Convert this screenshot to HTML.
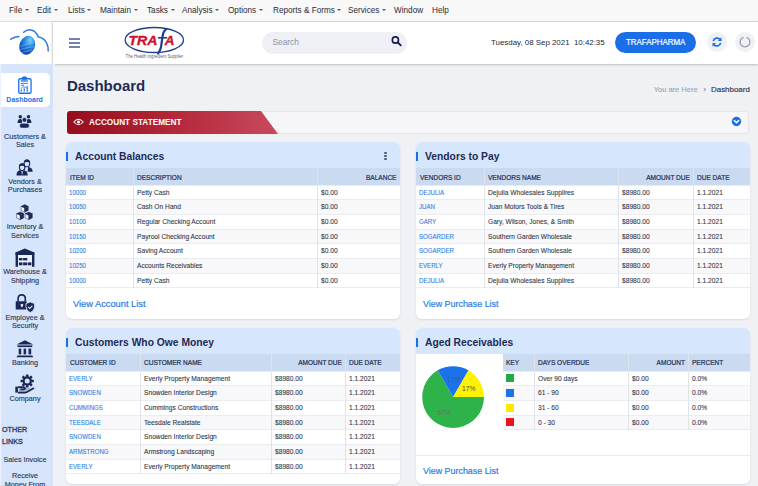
<!DOCTYPE html>
<html><head><meta charset="utf-8">
<style>
*{box-sizing:border-box;margin:0;padding:0}
html,body{width:758px;height:486px;overflow:hidden}
body{position:relative;background:#eff1f5;font-family:"Liberation Sans",sans-serif;color:#2d3345}
.abs{position:absolute}
#menubar{left:0;top:0;width:758px;height:22px;background:#f8f8f9;border-bottom:1px solid #dedfe3}
#menubar span{position:absolute;top:5.8px;font-size:8.2px;color:#2b2b33;white-space:nowrap}
#menubar i{display:inline-block;width:0;height:0;border-left:2px solid transparent;border-right:2px solid transparent;border-top:2.4px solid #55555c;margin-left:2.6px;position:relative;top:-1.8px}
#logo{left:0;top:22px;width:53px;height:42px;background:#fff}
#header{left:53px;top:22px;width:705px;height:42px;background:#fff;box-shadow:-1px 0 1.5px rgba(0,0,0,.13),0 1px 2.5px rgba(0,0,0,.18)}
#sidebar{left:0;top:64px;width:53px;height:422px;background:#d6e5fb}
#hdrshade{left:49px;top:64px;width:4px;height:422px;background:#d5e3f6}
#sbedge{left:0;top:64px;width:1px;height:422px;background:#eaf1fc}
#mainedge{left:53px;top:64px;width:2px;height:422px;background:#eef0fa}
.nav{position:absolute;left:0;width:53px;text-align:center;font-size:7.2px;line-height:8.4px;color:#2f3a58}
.nav svg{display:block;margin:0 auto}
.title{font-size:15px;font-weight:700;color:#1f2b55}
.panel{position:absolute;background:#fff;border-radius:6px;overflow:hidden;box-shadow:0 1px 2px rgba(40,60,100,.12)}
.ph{position:absolute;left:0;top:0;width:100%;background:#d6e6fd}
.ph .bar{position:absolute;left:0;width:2px;height:9px;background:#1a6fe8}
.ph .t{position:absolute;font-size:10.5px;font-weight:700;color:#1f2b55;white-space:nowrap}
table{border-collapse:collapse;table-layout:fixed;position:absolute;left:0}
th{background:#c9daf1;font-size:6.6px;font-weight:400;color:#1f2b55;text-align:left;height:17px;padding:0 3.5px;white-space:nowrap;-webkit-text-stroke:0.15px #1f2b55}
td{font-size:6.5px;height:14.7px;padding:0 3.5px;white-space:nowrap;border-top:1px solid #e4e7ed;color:#2d3345}
th+th,td+td{border-left:1px solid #dde2ea}
tr:nth-child(even) td{background:#f6f7f9}
td.l{color:#2a78e4}
.r{text-align:right}
.link{position:absolute;font-size:9.3px;color:#2f7de1;white-space:nowrap}
</style></head>
<body>
<div id="menubar" class="abs">
<span style="left:9px">File<i></i></span>
<span style="left:37px">Edit<i></i></span>
<span style="left:68px">Lists<i></i></span>
<span style="left:100px">Maintain<i></i></span>
<span style="left:147px">Tasks<i></i></span>
<span style="left:182px">Analysis<i></i></span>
<span style="left:228px">Options<i></i></span>
<span style="left:273px">Reports &amp; Forms<i></i></span>
<span style="left:348px">Services<i></i></span>
<span style="left:394px">Window</span>
<span style="left:432px">Help</span>
</div>

<div id="logo" class="abs">
<svg width="53" height="42" viewBox="0 0 53 42">
 <defs><radialGradient id="gl" cx="0.55" cy="0.2" r="0.9"><stop offset="0" stop-color="#7fd3fb"/><stop offset=".35" stop-color="#2f8fe6"/><stop offset=".8" stop-color="#1048b8"/><stop offset="1" stop-color="#0a2f90"/></radialGradient></defs>
 <path d="M10.8 17.2 Q14.5 14.6 19 14.4" stroke="#2a7ae2" stroke-width="1.5" fill="none" stroke-linecap="round"/>
 <path d="M23.7 10.3 Q27 7.3 31 7.9 Q36 8.8 38.4 15 Q43.8 15.6 46.6 21 Q48.6 25 48.2 28.9" stroke="#2a7ae2" stroke-width="1.5" fill="none" stroke-linecap="round"/>
 <ellipse cx="27.2" cy="23.3" rx="7.7" ry="9.7" transform="rotate(22 27.2 23.3)" fill="url(#gl)"/>
 <path d="M20 24.5 Q27 21.5 34.5 20.5 M20.3 27.6 Q27 25.5 34 24.5 M21.8 30.6 Q27 29 32.5 28" stroke="#8ad0fa" stroke-width=".8" fill="none" opacity=".55"/>
</svg>
</div>

<div id="header" class="abs">
 <!-- hamburger -->
 <div class="abs" style="left:16px;top:16px;width:11px;height:1.6px;background:#7083a8"></div>
 <div class="abs" style="left:16px;top:20px;width:11px;height:1.6px;background:#7083a8"></div>
 <div class="abs" style="left:16px;top:24px;width:11px;height:1.6px;background:#7083a8"></div>
 <!-- TRAFA logo -->
 <svg class="abs" style="left:70px;top:4px" width="64" height="34" viewBox="0 0 64 34">
  <ellipse cx="31.3" cy="14" rx="29.2" ry="12.5" fill="none" stroke="#1d3f8f" stroke-width="1.3"/>
  <text x="5.5" y="19.3" font-family="Liberation Sans" font-weight="700" font-style="italic" font-size="13.4" fill="#d0102a" stroke="#d0102a" stroke-width="0.35" textLength="29" lengthAdjust="spacingAndGlyphs">TRA</text>
  <text x="41.8" y="19.3" font-family="Liberation Sans" font-weight="700" font-style="italic" font-size="13.4" fill="#d0102a" stroke="#d0102a" stroke-width="0.35">A</text>
  <path d="M43.5 3 Q40.5 4.5 39.6 10 L38 21 Q37.2 25 35 27.5" stroke="#1d3f8f" stroke-width="2.2" fill="none" stroke-linecap="round"/>
  <path d="M35 11.8 L44.2 11.8" stroke="#1d3f8f" stroke-width="1.6"/>
  <text x="2.6" y="31.6" font-family="Liberation Sans" font-size="5" fill="#5d6070" textLength="57.5" lengthAdjust="spacingAndGlyphs">The Health Ingredient Supplier</text>
 </svg>
 <!-- search -->
 <div class="abs" style="left:209px;top:9.5px;width:145px;height:22.5px;border-radius:11.5px;background:#eef0f5"></div>
 <svg class="abs" style="left:337px;top:13px" width="14" height="14" viewBox="0 0 14 14">
  <circle cx="5.4" cy="5" r="3.1" fill="none" stroke="#141a4a" stroke-width="1.6"/>
  <path d="M7.8 7.5 L10.8 10.3" stroke="#141a4a" stroke-width="1.8" stroke-linecap="round"/>
 </svg>
 <div class="abs" style="left:562px;top:10.2px;width:81px;height:20.6px;border-radius:10.5px;background:#1a6fe8"></div>
 <div class="abs" style="left:654px;top:10px;width:20px;height:20px;border-radius:10px;background:#f0f1f4"></div>
 <svg class="abs" style="left:658px;top:14px" width="12" height="12" viewBox="0 0 12 12">
  <path d="M2.3 5.2 A3.9 3.9 0 0 1 9.2 3.6" stroke="#1a6fe8" stroke-width="1.7" fill="none"/>
  <path d="M10.5 1.2 L10.5 5 L6.8 5 Z" fill="#1a6fe8"/>
  <path d="M9.7 6.8 A3.9 3.9 0 0 1 2.8 8.4" stroke="#1a6fe8" stroke-width="1.7" fill="none"/>
  <path d="M1.5 10.8 L1.5 7 L5.2 7 Z" fill="#1a6fe8"/>
 </svg>
 <div class="abs" style="left:682px;top:10px;width:20px;height:20px;border-radius:10px;background:#f0f1f4"></div>
 <svg class="abs" style="left:686px;top:14px" width="12" height="12" viewBox="0 0 12 12">
  <path d="M7.5 1.3 A4.9 4.9 0 1 1 4.5 1.3" stroke="#9aa0b8" stroke-width="1.3" fill="none"/>
 </svg>
</div>

<div id="sidebar" class="abs">
</div>
<div id="hdrshade" class="abs"></div><div id="sbedge" class="abs"></div><div id="mainedge" class="abs"></div>


<!-- account statement -->
<div class="abs" style="left:67px;top:111px;width:682px;height:23px;background:#f6f6f8;border:1px solid #e4e6ec;border-radius:3px"></div>
<svg class="abs" style="left:67px;top:111px" width="212" height="23" viewBox="0 0 212 23">
 <defs><linearGradient id="rg" x1="0" y1="0" x2="1" y2="0"><stop offset="0" stop-color="#950d1c"/><stop offset=".5" stop-color="#b42739"/><stop offset="1" stop-color="#c84a5e"/></linearGradient></defs>
 <path d="M3 0 L194 0 L211 23 L3 23 Q0 23 0 20 L0 3 Q0 0 3 0 Z" fill="url(#rg)"/>
</svg>
<svg class="abs" style="left:73px;top:118px" width="11" height="8" viewBox="0 0 11 8">
 <path d="M0.8 4 Q5.5 -1.5 10.2 4 Q5.5 9.5 0.8 4 Z" fill="none" stroke="#fff" stroke-width="1.1"/>
 <circle cx="5.5" cy="4" r="1.6" fill="#fff"/>
</svg>
<svg class="abs" style="left:731.2px;top:115.8px" width="11" height="11" viewBox="0 0 11 11">
 <circle cx="5.5" cy="5.5" r="4.7" fill="#1a6fe8"/>
 <path d="M3.3 4.5 L5.5 6.7 L7.7 4.5" stroke="#fff" stroke-width="1.5" fill="none" stroke-linecap="round" stroke-linejoin="round"/>
</svg>

<div class="abs" style="left:272.40px;top:38px;font-size:8.4px;line-height:1;font-weight:400;color:#8b93a7;white-space:nowrap;">Search</div>
<div class="abs" style="left:491.00px;top:39px;font-size:7.9px;line-height:1;font-weight:400;color:#222a3a;white-space:nowrap;">Tuesday, 08 Sep 2021&nbsp;&nbsp;10:42:35</div>
<div class="abs" style="left:626.00px;top:38px;font-size:8.4px;line-height:1;font-weight:400;color:#fff;white-space:nowrap;transform:scaleX(0.945);transform-origin:left top;-webkit-text-stroke:0.2px #fff;">TRAFAPHARMA</div>
<div class="abs" style="left:66.90px;top:78px;font-size:15px;line-height:1;font-weight:700;color:#1f2b55;white-space:nowrap;">Dashboard</div>
<div class="abs" style="left:653.70px;top:86px;font-size:7.5px;line-height:1;font-weight:400;color:#a0a7b9;white-space:nowrap;-webkit-text-stroke:0.15px #a0a7b9;">You are Here</div>
<div class="abs" style="left:703.60px;top:86px;font-size:7.5px;line-height:1;font-weight:400;color:#98a0b3;white-space:nowrap;-webkit-text-stroke:0.35px #98a0b3;">&#8250;</div>
<div class="abs" style="left:711.30px;top:86px;font-size:7.6px;line-height:1;font-weight:400;color:#2c3558;white-space:nowrap;transform:scaleX(1.045);transform-origin:left top;-webkit-text-stroke:0.15px #2c3558;">Dashboard</div>
<div class="abs" style="left:88.60px;top:118px;font-size:8.6px;line-height:1;font-weight:700;color:#fff;white-space:nowrap;transform:scaleX(0.957);transform-origin:left top;">ACCOUNT STATEMENT</div>
<div class="abs" style="left:1px;top:73px;width:49px;height:33.5px;background:#fff;border-radius:0 5px 5px 0"></div>
<svg class="abs" style="left:17px;top:76px" width="15" height="18" viewBox="0 0 15 18">
<rect x="1.75" y="2.75" width="12.3" height="14.5" rx="1.3" fill="none" stroke="#1a6fe8" stroke-width="1.3"/>
<rect x="4.7" y="0.6" width="5.4" height="3.2" rx="1.5" fill="#1a6fe8"/>
<rect x="3.8" y="4.3" width="7" height="1.3" fill="#1a6fe8"/>
<rect x="3.8" y="6.9" width="7" height="0.9" fill="#1a6fe8"/>
<rect x="3.8" y="8.8" width="3.4" height="0.9" fill="#1a6fe8"/>
<rect x="3.7" y="13.6" width="1.2" height="2" fill="#1a6fe8"/>
<rect x="6.6" y="12.3" width="1.2" height="3.3" fill="#1a6fe8"/>
<rect x="9.6" y="11" width="1.2" height="4.6" fill="#1a6fe8"/>
<path d="M3.8 12.6 L6.8 10.6 L8.2 11.6 L11.2 9.6" stroke="#1a6fe8" stroke-width=".8" fill="none"/>
</svg>
<div class="abs" style="left:-15.40px;width:80px;text-align:center;top:96px;font-size:7px;line-height:1;font-weight:700;color:#1a6fe8;white-space:nowrap;">Dashboard</div>
<svg class="abs" style="left:17px;top:114px" width="15" height="15" viewBox="0 0 15 15">
<circle cx="3.3" cy="2.8" r="1.75" fill="#1b2756"/><circle cx="11.5" cy="2.8" r="1.75" fill="#1b2756"/>
<path d="M0.6 8.9 Q0.6 5 3.2 5 Q4.6 5 5 5.8 L5 8.9 Z" fill="#1b2756"/>
<path d="M14.4 8.9 Q14.4 5 11.8 5 Q10.4 5 10 5.8 L10 8.9 Z" fill="#1b2756"/>
<circle cx="7.45" cy="5.9" r="2.3" fill="#1b2756" stroke="#d6e5fb" stroke-width=".6"/>
<rect x="2.7" y="9.2" width="9.5" height="4.9" rx="1.8" fill="#1b2756" stroke="#d6e5fb" stroke-width=".6"/>
</svg>
<div class="abs" style="left:-15.40px;width:80px;text-align:center;top:133px;font-size:7.8px;line-height:1;font-weight:400;color:#2f3a58;white-space:nowrap;transform:scaleX(0.93);transform-origin:center top;-webkit-text-stroke:0.15px #2f3a58;">Customers &amp;</div>
<div class="abs" style="left:-15.40px;width:80px;text-align:center;top:141px;font-size:7.8px;line-height:1;font-weight:400;color:#2f3a58;white-space:nowrap;transform:scaleX(0.93);transform-origin:center top;-webkit-text-stroke:0.15px #2f3a58;">Sales</div>
<svg class="abs" style="left:16px;top:158.5px" width="17" height="17" viewBox="0 0 17 17">
<path d="M12.2 8 Q16.4 8.4 16.6 12.2 L16.6 12.8 L11.6 12.8 Z" fill="#1b2756"/>
<ellipse cx="10.9" cy="4.4" rx="2.8" ry="3.4" fill="#d6e5fb" stroke="#1b2756" stroke-width="1.1"/>
<path d="M7.9 3.6 Q8 0.6 10.9 0.6 Q13.8 0.6 13.9 3.6 Q11 2.3 7.9 3.6 Z" fill="#1b2756"/>
<path d="M0.5 16.4 Q0.5 11.9 4.2 11.3 L6.1 13 L8 11.3 Q11.7 11.9 11.7 16.4 Z" fill="#1b2756"/>
<ellipse cx="6.1" cy="8.2" rx="2.7" ry="3.3" fill="#d6e5fb" stroke="#1b2756" stroke-width="1.1"/>
<path d="M3.2 7.4 Q3.3 4.6 6.1 4.6 Q8.9 4.6 9 7.4 Q6.1 6.1 3.2 7.4 Z" fill="#1b2756"/>
<path d="M6.1 12.4 L5.5 13.6 L6.1 16.2 L6.7 13.6 Z" fill="#d6e5fb"/>
</svg>
<div class="abs" style="left:-15.40px;width:80px;text-align:center;top:178px;font-size:7.8px;line-height:1;font-weight:400;color:#2f3a58;white-space:nowrap;transform:scaleX(0.93);transform-origin:center top;-webkit-text-stroke:0.15px #2f3a58;">Vendors &amp;</div>
<div class="abs" style="left:-15.40px;width:80px;text-align:center;top:186px;font-size:7.8px;line-height:1;font-weight:400;color:#2f3a58;white-space:nowrap;transform:scaleX(0.93);transform-origin:center top;-webkit-text-stroke:0.15px #2f3a58;">Purchases</div>
<svg class="abs" style="left:16px;top:204px" width="18" height="17" viewBox="0 0 18 17"><path d="M5.1 2.2 L8.7 3.9 L8.7 8.3 L5.1 6.5 Z" fill="#f2f6fc" stroke="#1b2756" stroke-width=".5" stroke-linejoin="round"/><path d="M5.1 2.2 L8.7 0.6 L12.3 2.2 L8.7 3.9 Z" fill="#1b2756" stroke="#1b2756" stroke-width=".3" stroke-linejoin="round"/><path d="M8.7 3.9 L12.3 2.2 L12.3 6.5 L8.7 8.3 Z" fill="#1b2756" stroke="#1b2756" stroke-width=".3" stroke-linejoin="round"/><path d="M0.6 9.6 L4.2 11.3 L4.2 15.7 L0.6 13.9 Z" fill="#f2f6fc" stroke="#1b2756" stroke-width=".5" stroke-linejoin="round"/><path d="M0.6 9.6 L4.2 8.0 L7.8 9.6 L4.2 11.3 Z" fill="#1b2756" stroke="#1b2756" stroke-width=".3" stroke-linejoin="round"/><path d="M4.2 11.3 L7.8 9.6 L7.8 13.9 L4.2 15.7 Z" fill="#1b2756" stroke="#1b2756" stroke-width=".3" stroke-linejoin="round"/><path d="M9.2 9.6 L12.8 11.3 L12.8 15.7 L9.2 13.9 Z" fill="#f2f6fc" stroke="#1b2756" stroke-width=".5" stroke-linejoin="round"/><path d="M9.2 9.6 L12.8 8.0 L16.4 9.6 L12.8 11.3 Z" fill="#1b2756" stroke="#1b2756" stroke-width=".3" stroke-linejoin="round"/><path d="M12.8 11.3 L16.4 9.6 L16.4 13.9 L12.8 15.7 Z" fill="#1b2756" stroke="#1b2756" stroke-width=".3" stroke-linejoin="round"/></svg>
<div class="abs" style="left:-15.40px;width:80px;text-align:center;top:223px;font-size:7.8px;line-height:1;font-weight:400;color:#2f3a58;white-space:nowrap;transform:scaleX(0.93);transform-origin:center top;-webkit-text-stroke:0.15px #2f3a58;">Inventory &amp;</div>
<div class="abs" style="left:-15.40px;width:80px;text-align:center;top:232px;font-size:7.8px;line-height:1;font-weight:400;color:#2f3a58;white-space:nowrap;transform:scaleX(0.93);transform-origin:center top;-webkit-text-stroke:0.15px #2f3a58;">Services</div>
<svg class="abs" style="left:14.5px;top:248px" width="20" height="20" viewBox="0 0 20 20">
<rect x="3" y="6.9" width="14" height="11.9" fill="#eaf1fc"/><path d="M0.5 4.6 L9.8 0.6 L19.3 4.6 L19.3 6.9 L0.5 6.9 Z" fill="#1b2756"/>
<rect x="0.6" y="4.4" width="2.4" height="14.4" fill="#1b2756"/><rect x="17" y="4.4" width="2.4" height="14.4" fill="#1b2756"/>
<rect x="3.9" y="10" width="3.6" height="2.4" fill="#1b2756"/><rect x="8.1" y="10" width="4.2" height="2.4" fill="#1b2756"/>
<rect x="3.9" y="14.4" width="3.6" height="2.9" fill="#1b2756"/><rect x="8.1" y="14.4" width="4.2" height="2.9" fill="#1b2756"/><rect x="12.9" y="14.4" width="3.5" height="2.9" fill="#1b2756"/>
</svg>
<div class="abs" style="left:-15.40px;width:80px;text-align:center;top:268px;font-size:7.8px;line-height:1;font-weight:400;color:#2f3a58;white-space:nowrap;transform:scaleX(0.93);transform-origin:center top;-webkit-text-stroke:0.15px #2f3a58;">Warehouse &amp;</div>
<div class="abs" style="left:-15.40px;width:80px;text-align:center;top:277px;font-size:7.8px;line-height:1;font-weight:400;color:#2f3a58;white-space:nowrap;transform:scaleX(0.93);transform-origin:center top;-webkit-text-stroke:0.15px #2f3a58;">Shipping</div>
<svg class="abs" style="left:14.5px;top:293.5px" width="20" height="19" viewBox="0 0 20 19">
<path d="M3.1 7.6 L3.1 4.6 Q3.1 0.9 6.7 0.9 Q10.3 0.9 10.3 4.6 L10.3 7.6" stroke="#1b2756" stroke-width="1.6" fill="none"/>
<rect x="0.7" y="7.2" width="11" height="8.3" rx=".6" fill="#1b2756"/>
<path d="M6.9 13.8 L5.7 11.6 A1.35 1.35 0 1 1 8.1 11.6 Z" fill="#e8effb"/>
<path d="M15.3 7.9 L19.6 9.6 L19.6 12.8 Q19.6 16.6 15.3 18.6 Q11 16.6 11 12.8 L11 9.6 Z" fill="#1b2756" stroke="#d6e5fb" stroke-width=".9"/>
<path d="M13.3 13 L14.8 14.5 L17.4 11.7" stroke="#e8effb" stroke-width="1.1" fill="none"/>
</svg>
<div class="abs" style="left:-15.40px;width:80px;text-align:center;top:314px;font-size:7.8px;line-height:1;font-weight:400;color:#2f3a58;white-space:nowrap;transform:scaleX(0.93);transform-origin:center top;-webkit-text-stroke:0.15px #2f3a58;">Employee &amp;</div>
<div class="abs" style="left:-15.40px;width:80px;text-align:center;top:322px;font-size:7.8px;line-height:1;font-weight:400;color:#2f3a58;white-space:nowrap;transform:scaleX(0.93);transform-origin:center top;-webkit-text-stroke:0.15px #2f3a58;">Security</div>
<svg class="abs" style="left:15.5px;top:339.5px" width="18" height="18" viewBox="0 0 18 18">
<path d="M0.5 4.5 L8.9 0.2 L17.3 4.5 Z" fill="#1b2756"/>
<rect x="1.5" y="5.4" width="14.8" height="1.7" fill="#1b2756"/>
<rect x="2.7" y="8.6" width="2.5" height="5.8" fill="#1b2756"/><rect x="7.6" y="8.6" width="2.5" height="5.8" fill="#1b2756"/><rect x="12.5" y="8.6" width="2.7" height="5.8" fill="#1b2756"/>
<path d="M0.5 17.3 L1.5 15.4 L16.3 15.4 L17.3 17.3 Z" fill="#1b2756"/>
</svg>
<div class="abs" style="left:-15.40px;width:80px;text-align:center;top:359px;font-size:7.8px;line-height:1;font-weight:400;color:#2f3a58;white-space:nowrap;transform:scaleX(0.93);transform-origin:center top;-webkit-text-stroke:0.15px #2f3a58;">Banking</div>
<svg class="abs" style="left:15px;top:374px" width="20" height="20" viewBox="0 0 20 20">
<circle cx="12.2" cy="7" r="4.7" fill="#1b2756"/><rect x="10.9" y="0.4" width="2.6" height="2.6" rx=".5" fill="#1b2756" transform="rotate(0 12.2 7)"/><rect x="10.9" y="0.4" width="2.6" height="2.6" rx=".5" fill="#1b2756" transform="rotate(45 12.2 7)"/><rect x="10.9" y="0.4" width="2.6" height="2.6" rx=".5" fill="#1b2756" transform="rotate(90 12.2 7)"/><rect x="10.9" y="0.4" width="2.6" height="2.6" rx=".5" fill="#1b2756" transform="rotate(135 12.2 7)"/><rect x="10.9" y="0.4" width="2.6" height="2.6" rx=".5" fill="#1b2756" transform="rotate(180 12.2 7)"/><rect x="10.9" y="0.4" width="2.6" height="2.6" rx=".5" fill="#1b2756" transform="rotate(225 12.2 7)"/><rect x="10.9" y="0.4" width="2.6" height="2.6" rx=".5" fill="#1b2756" transform="rotate(270 12.2 7)"/><rect x="10.9" y="0.4" width="2.6" height="2.6" rx=".5" fill="#1b2756" transform="rotate(315 12.2 7)"/>
<circle cx="12.2" cy="7" r="2.5" fill="#d6e5fb"/>
<rect x="0.3" y="12.6" width="2.6" height="6" fill="#1b2756"/>
<path d="M3.6 13.2 L8.6 13.2 Q10 13.2 10 14.4 Q10 15.3 8.8 15.3 L6 15.3 M3.6 18.6 L10 18.6 Q11 18.6 12 18 L18.5 14.3" stroke="#1b2756" stroke-width="1.7" fill="none" stroke-linecap="round" stroke-linejoin="round"/>
<path d="M3.6 14 L3.6 18 L9.5 18 L17 14 Z" fill="#1b2756" opacity=".25"/>
</svg>
<div class="abs" style="left:-15.40px;width:80px;text-align:center;top:395px;font-size:7.8px;line-height:1;font-weight:400;color:#2f3a58;white-space:nowrap;transform:scaleX(0.93);transform-origin:center top;-webkit-text-stroke:0.15px #2f3a58;">Company</div>
<div class="abs" style="left:2.30px;top:426px;font-size:7.4px;line-height:1;font-weight:400;color:#333e60;white-space:nowrap;transform:scaleX(0.97);transform-origin:left top;-webkit-text-stroke:0.35px #333e60;">OTHER</div>
<div class="abs" style="left:2.30px;top:438px;font-size:7.4px;line-height:1;font-weight:400;color:#333e60;white-space:nowrap;transform:scaleX(0.97);transform-origin:left top;-webkit-text-stroke:0.35px #333e60;">LINKS</div>
<div class="abs" style="left:-15.40px;width:80px;text-align:center;top:456px;font-size:7.6px;line-height:1;font-weight:400;color:#2f3a58;white-space:nowrap;transform:scaleX(0.95);transform-origin:center top;-webkit-text-stroke:0.15px #2f3a58;">Sales Invoice</div>
<div class="abs" style="left:-15.40px;width:80px;text-align:center;top:472px;font-size:7.6px;line-height:1;font-weight:400;color:#2f3a58;white-space:nowrap;transform:scaleX(0.95);transform-origin:center top;-webkit-text-stroke:0.15px #2f3a58;">Receive</div>
<div class="abs" style="left:-15.40px;width:80px;text-align:center;top:481px;font-size:7.6px;line-height:1;font-weight:400;color:#2f3a58;white-space:nowrap;transform:scaleX(0.95);transform-origin:center top;-webkit-text-stroke:0.15px #2f3a58;">Money From</div>
<div class="panel" style="left:66px;top:141.5px;width:334.00px;height:177.50px">
<div class="ph" style="height:26.80px"></div>
</div>
<div class="abs" style="left:66.3px;top:151.9px;width:2px;height:9px;background:#1a6fe8"></div>
<div class="abs" style="left:75.00px;top:152px;font-size:10.3px;line-height:1;font-weight:700;color:#1f2b55;white-space:nowrap;">Account Balances</div>
<div class="abs" style="left:384.4px;top:152.3px;width:2.2px;height:2.2px;border-radius:1.1px;background:#555b72"></div>
<div class="abs" style="left:384.4px;top:155.05px;width:2.2px;height:2.2px;border-radius:1.1px;background:#555b72"></div>
<div class="abs" style="left:384.4px;top:157.8px;width:2.2px;height:2.2px;border-radius:1.1px;background:#555b72"></div>
<div class="abs" style="left:66px;top:168.30px;width:334.00px;height:17.00px;background:#c9daf1"></div>
<div class="abs" style="left:66px;top:184.80px;width:334.00px;height:1px;background:#eaecf0"></div>
<div class="abs" style="left:66px;top:199.96px;width:334.00px;height:14.66px;background:#f8f8fa"></div>
<div class="abs" style="left:66px;top:199.46px;width:334.00px;height:1px;background:#eaecf0"></div>
<div class="abs" style="left:66px;top:214.12px;width:334.00px;height:1px;background:#eaecf0"></div>
<div class="abs" style="left:66px;top:229.28px;width:334.00px;height:14.66px;background:#f8f8fa"></div>
<div class="abs" style="left:66px;top:228.78px;width:334.00px;height:1px;background:#eaecf0"></div>
<div class="abs" style="left:66px;top:243.44px;width:334.00px;height:1px;background:#eaecf0"></div>
<div class="abs" style="left:66px;top:258.60px;width:334.00px;height:14.66px;background:#f8f8fa"></div>
<div class="abs" style="left:66px;top:258.10px;width:334.00px;height:1px;background:#eaecf0"></div>
<div class="abs" style="left:66px;top:272.76px;width:334.00px;height:1px;background:#eaecf0"></div>
<div class="abs" style="left:66px;top:287.42px;width:334.00px;height:1px;background:#eaecf0"></div>
<div class="abs" style="left:133.1px;top:168.30px;width:1px;height:119.62px;background:#dfe3ea"></div>
<div class="abs" style="left:316.5px;top:168.30px;width:1px;height:119.62px;background:#dfe3ea"></div>
<div class="abs" style="left:69.50px;top:174px;font-size:7.6px;line-height:1;font-weight:400;color:#26325a;white-space:nowrap;transform:scaleX(0.86);transform-origin:left top;-webkit-text-stroke:0.24px #26325a;">ITEM ID</div>
<div class="abs" style="left:137.10px;top:174px;font-size:7.6px;line-height:1;font-weight:400;color:#26325a;white-space:nowrap;transform:scaleX(0.86);transform-origin:left top;-webkit-text-stroke:0.24px #26325a;">DESCRIPTION</div>
<div class="abs" style="right:361.50px;top:174px;font-size:7.6px;line-height:1;font-weight:400;color:#26325a;white-space:nowrap;transform:scaleX(0.86);transform-origin:right top;-webkit-text-stroke:0.24px #26325a;">BALANCE</div>
<div class="abs" style="left:69.10px;top:189px;font-size:7px;line-height:1;font-weight:400;color:#2a78e4;white-space:nowrap;transform:scaleX(0.87);transform-origin:left top;-webkit-text-stroke:0.08px #2a78e4;">10000</div>
<div class="abs" style="left:137.10px;top:189px;font-size:7px;line-height:1;font-weight:400;color:#2d3345;white-space:nowrap;transform:scaleX(0.95);transform-origin:left top;-webkit-text-stroke:0.08px #2d3345;">Petty Cash</div>
<div class="abs" style="left:320.50px;top:189px;font-size:7px;line-height:1;font-weight:400;color:#2d3345;white-space:nowrap;transform:scaleX(0.95);transform-origin:left top;-webkit-text-stroke:0.08px #2d3345;">$0.00</div>
<div class="abs" style="left:69.10px;top:203px;font-size:7px;line-height:1;font-weight:400;color:#2a78e4;white-space:nowrap;transform:scaleX(0.87);transform-origin:left top;-webkit-text-stroke:0.08px #2a78e4;">10050</div>
<div class="abs" style="left:137.10px;top:203px;font-size:7px;line-height:1;font-weight:400;color:#2d3345;white-space:nowrap;transform:scaleX(0.95);transform-origin:left top;-webkit-text-stroke:0.08px #2d3345;">Cash On Hand</div>
<div class="abs" style="left:320.50px;top:203px;font-size:7px;line-height:1;font-weight:400;color:#2d3345;white-space:nowrap;transform:scaleX(0.95);transform-origin:left top;-webkit-text-stroke:0.08px #2d3345;">$0.00</div>
<div class="abs" style="left:69.10px;top:218px;font-size:7px;line-height:1;font-weight:400;color:#2a78e4;white-space:nowrap;transform:scaleX(0.87);transform-origin:left top;-webkit-text-stroke:0.08px #2a78e4;">10100</div>
<div class="abs" style="left:137.10px;top:218px;font-size:7px;line-height:1;font-weight:400;color:#2d3345;white-space:nowrap;transform:scaleX(0.95);transform-origin:left top;-webkit-text-stroke:0.08px #2d3345;">Regular Checking Account</div>
<div class="abs" style="left:320.50px;top:218px;font-size:7px;line-height:1;font-weight:400;color:#2d3345;white-space:nowrap;transform:scaleX(0.95);transform-origin:left top;-webkit-text-stroke:0.08px #2d3345;">$0.00</div>
<div class="abs" style="left:69.10px;top:233px;font-size:7px;line-height:1;font-weight:400;color:#2a78e4;white-space:nowrap;transform:scaleX(0.87);transform-origin:left top;-webkit-text-stroke:0.08px #2a78e4;">10150</div>
<div class="abs" style="left:137.10px;top:233px;font-size:7px;line-height:1;font-weight:400;color:#2d3345;white-space:nowrap;transform:scaleX(0.95);transform-origin:left top;-webkit-text-stroke:0.08px #2d3345;">Payrool Checking Account</div>
<div class="abs" style="left:320.50px;top:233px;font-size:7px;line-height:1;font-weight:400;color:#2d3345;white-space:nowrap;transform:scaleX(0.95);transform-origin:left top;-webkit-text-stroke:0.08px #2d3345;">$0.00</div>
<div class="abs" style="left:69.10px;top:247px;font-size:7px;line-height:1;font-weight:400;color:#2a78e4;white-space:nowrap;transform:scaleX(0.87);transform-origin:left top;-webkit-text-stroke:0.08px #2a78e4;">10200</div>
<div class="abs" style="left:137.10px;top:247px;font-size:7px;line-height:1;font-weight:400;color:#2d3345;white-space:nowrap;transform:scaleX(0.95);transform-origin:left top;-webkit-text-stroke:0.08px #2d3345;">Saving Account</div>
<div class="abs" style="left:320.50px;top:247px;font-size:7px;line-height:1;font-weight:400;color:#2d3345;white-space:nowrap;transform:scaleX(0.95);transform-origin:left top;-webkit-text-stroke:0.08px #2d3345;">$0.00</div>
<div class="abs" style="left:69.10px;top:262px;font-size:7px;line-height:1;font-weight:400;color:#2a78e4;white-space:nowrap;transform:scaleX(0.87);transform-origin:left top;-webkit-text-stroke:0.08px #2a78e4;">10250</div>
<div class="abs" style="left:137.10px;top:262px;font-size:7px;line-height:1;font-weight:400;color:#2d3345;white-space:nowrap;transform:scaleX(0.95);transform-origin:left top;-webkit-text-stroke:0.08px #2d3345;">Accounts Receivables</div>
<div class="abs" style="left:320.50px;top:262px;font-size:7px;line-height:1;font-weight:400;color:#2d3345;white-space:nowrap;transform:scaleX(0.95);transform-origin:left top;-webkit-text-stroke:0.08px #2d3345;">$0.00</div>
<div class="abs" style="left:69.10px;top:277px;font-size:7px;line-height:1;font-weight:400;color:#2a78e4;white-space:nowrap;transform:scaleX(0.87);transform-origin:left top;-webkit-text-stroke:0.08px #2a78e4;">10000</div>
<div class="abs" style="left:137.10px;top:277px;font-size:7px;line-height:1;font-weight:400;color:#2d3345;white-space:nowrap;transform:scaleX(0.95);transform-origin:left top;-webkit-text-stroke:0.08px #2d3345;">Petty Cash</div>
<div class="abs" style="left:320.50px;top:277px;font-size:7px;line-height:1;font-weight:400;color:#2d3345;white-space:nowrap;transform:scaleX(0.95);transform-origin:left top;-webkit-text-stroke:0.08px #2d3345;">$0.00</div>
<div class="abs" style="left:72.90px;top:300px;font-size:9.3px;line-height:1;font-weight:400;color:#2a7be6;white-space:nowrap;-webkit-text-stroke:0.2px #2a7be6;">View Account List</div>
<div class="panel" style="left:416px;top:141.5px;width:334.00px;height:177.50px">
<div class="ph" style="height:26.80px"></div>
</div>
<div class="abs" style="left:416.3px;top:151.9px;width:2px;height:9px;background:#1a6fe8"></div>
<div class="abs" style="left:425.00px;top:152px;font-size:10.3px;line-height:1;font-weight:700;color:#1f2b55;white-space:nowrap;">Vendors to Pay</div>
<div class="abs" style="left:416px;top:168.30px;width:334.00px;height:17.00px;background:#c9daf1"></div>
<div class="abs" style="left:416px;top:184.80px;width:334.00px;height:1px;background:#eaecf0"></div>
<div class="abs" style="left:416px;top:199.96px;width:334.00px;height:14.66px;background:#f8f8fa"></div>
<div class="abs" style="left:416px;top:199.46px;width:334.00px;height:1px;background:#eaecf0"></div>
<div class="abs" style="left:416px;top:214.12px;width:334.00px;height:1px;background:#eaecf0"></div>
<div class="abs" style="left:416px;top:229.28px;width:334.00px;height:14.66px;background:#f8f8fa"></div>
<div class="abs" style="left:416px;top:228.78px;width:334.00px;height:1px;background:#eaecf0"></div>
<div class="abs" style="left:416px;top:243.44px;width:334.00px;height:1px;background:#eaecf0"></div>
<div class="abs" style="left:416px;top:258.60px;width:334.00px;height:14.66px;background:#f8f8fa"></div>
<div class="abs" style="left:416px;top:258.10px;width:334.00px;height:1px;background:#eaecf0"></div>
<div class="abs" style="left:416px;top:272.76px;width:334.00px;height:1px;background:#eaecf0"></div>
<div class="abs" style="left:416px;top:287.42px;width:334.00px;height:1px;background:#eaecf0"></div>
<div class="abs" style="left:483.9px;top:168.30px;width:1px;height:119.62px;background:#dfe3ea"></div>
<div class="abs" style="left:618.3px;top:168.30px;width:1px;height:119.62px;background:#dfe3ea"></div>
<div class="abs" style="left:692.9px;top:168.30px;width:1px;height:119.62px;background:#dfe3ea"></div>
<div class="abs" style="left:419.50px;top:174px;font-size:7.6px;line-height:1;font-weight:400;color:#26325a;white-space:nowrap;transform:scaleX(0.86);transform-origin:left top;-webkit-text-stroke:0.24px #26325a;">VENDORS ID</div>
<div class="abs" style="left:487.90px;top:174px;font-size:7.6px;line-height:1;font-weight:400;color:#26325a;white-space:nowrap;transform:scaleX(0.86);transform-origin:left top;-webkit-text-stroke:0.24px #26325a;">VENDORS NAME</div>
<div class="abs" style="right:68.10px;top:174px;font-size:7.6px;line-height:1;font-weight:400;color:#26325a;white-space:nowrap;transform:scaleX(0.86);transform-origin:right top;-webkit-text-stroke:0.24px #26325a;">AMOUNT DUE</div>
<div class="abs" style="left:696.90px;top:174px;font-size:7.6px;line-height:1;font-weight:400;color:#26325a;white-space:nowrap;transform:scaleX(0.86);transform-origin:left top;-webkit-text-stroke:0.24px #26325a;">DUE DATE</div>
<div class="abs" style="left:419.10px;top:189px;font-size:7px;line-height:1;font-weight:400;color:#2a78e4;white-space:nowrap;transform:scaleX(0.87);transform-origin:left top;-webkit-text-stroke:0.08px #2a78e4;">DEJULIA</div>
<div class="abs" style="left:487.90px;top:189px;font-size:7px;line-height:1;font-weight:400;color:#2d3345;white-space:nowrap;transform:scaleX(0.95);transform-origin:left top;-webkit-text-stroke:0.08px #2d3345;">Dejulia Wholesales Supplires</div>
<div class="abs" style="left:622.30px;top:189px;font-size:7px;line-height:1;font-weight:400;color:#2d3345;white-space:nowrap;transform:scaleX(0.95);transform-origin:left top;-webkit-text-stroke:0.08px #2d3345;">$8980.00</div>
<div class="abs" style="left:696.90px;top:189px;font-size:7px;line-height:1;font-weight:400;color:#2d3345;white-space:nowrap;transform:scaleX(0.95);transform-origin:left top;-webkit-text-stroke:0.08px #2d3345;">1.1.2021</div>
<div class="abs" style="left:419.10px;top:203px;font-size:7px;line-height:1;font-weight:400;color:#2a78e4;white-space:nowrap;transform:scaleX(0.87);transform-origin:left top;-webkit-text-stroke:0.08px #2a78e4;">JUAN</div>
<div class="abs" style="left:487.90px;top:203px;font-size:7px;line-height:1;font-weight:400;color:#2d3345;white-space:nowrap;transform:scaleX(0.95);transform-origin:left top;-webkit-text-stroke:0.08px #2d3345;">Juan Motors Tools &amp; Tires</div>
<div class="abs" style="left:622.30px;top:203px;font-size:7px;line-height:1;font-weight:400;color:#2d3345;white-space:nowrap;transform:scaleX(0.95);transform-origin:left top;-webkit-text-stroke:0.08px #2d3345;">$8980.00</div>
<div class="abs" style="left:696.90px;top:203px;font-size:7px;line-height:1;font-weight:400;color:#2d3345;white-space:nowrap;transform:scaleX(0.95);transform-origin:left top;-webkit-text-stroke:0.08px #2d3345;">1.1.2021</div>
<div class="abs" style="left:419.10px;top:218px;font-size:7px;line-height:1;font-weight:400;color:#2a78e4;white-space:nowrap;transform:scaleX(0.87);transform-origin:left top;-webkit-text-stroke:0.08px #2a78e4;">GARY</div>
<div class="abs" style="left:487.90px;top:218px;font-size:7px;line-height:1;font-weight:400;color:#2d3345;white-space:nowrap;transform:scaleX(0.95);transform-origin:left top;-webkit-text-stroke:0.08px #2d3345;">Gary, Wilson, Jones, &amp; Smith</div>
<div class="abs" style="left:622.30px;top:218px;font-size:7px;line-height:1;font-weight:400;color:#2d3345;white-space:nowrap;transform:scaleX(0.95);transform-origin:left top;-webkit-text-stroke:0.08px #2d3345;">$8980.00</div>
<div class="abs" style="left:696.90px;top:218px;font-size:7px;line-height:1;font-weight:400;color:#2d3345;white-space:nowrap;transform:scaleX(0.95);transform-origin:left top;-webkit-text-stroke:0.08px #2d3345;">1.1.2021</div>
<div class="abs" style="left:419.10px;top:233px;font-size:7px;line-height:1;font-weight:400;color:#2a78e4;white-space:nowrap;transform:scaleX(0.87);transform-origin:left top;-webkit-text-stroke:0.08px #2a78e4;">SOGARDER</div>
<div class="abs" style="left:487.90px;top:233px;font-size:7px;line-height:1;font-weight:400;color:#2d3345;white-space:nowrap;transform:scaleX(0.95);transform-origin:left top;-webkit-text-stroke:0.08px #2d3345;">Southern Garden Wholesale</div>
<div class="abs" style="left:622.30px;top:233px;font-size:7px;line-height:1;font-weight:400;color:#2d3345;white-space:nowrap;transform:scaleX(0.95);transform-origin:left top;-webkit-text-stroke:0.08px #2d3345;">$8980.00</div>
<div class="abs" style="left:696.90px;top:233px;font-size:7px;line-height:1;font-weight:400;color:#2d3345;white-space:nowrap;transform:scaleX(0.95);transform-origin:left top;-webkit-text-stroke:0.08px #2d3345;">1.1.2021</div>
<div class="abs" style="left:419.10px;top:247px;font-size:7px;line-height:1;font-weight:400;color:#2a78e4;white-space:nowrap;transform:scaleX(0.87);transform-origin:left top;-webkit-text-stroke:0.08px #2a78e4;">SOGARDER</div>
<div class="abs" style="left:487.90px;top:247px;font-size:7px;line-height:1;font-weight:400;color:#2d3345;white-space:nowrap;transform:scaleX(0.95);transform-origin:left top;-webkit-text-stroke:0.08px #2d3345;">Southern Garden Wholesale</div>
<div class="abs" style="left:622.30px;top:247px;font-size:7px;line-height:1;font-weight:400;color:#2d3345;white-space:nowrap;transform:scaleX(0.95);transform-origin:left top;-webkit-text-stroke:0.08px #2d3345;">$8980.00</div>
<div class="abs" style="left:696.90px;top:247px;font-size:7px;line-height:1;font-weight:400;color:#2d3345;white-space:nowrap;transform:scaleX(0.95);transform-origin:left top;-webkit-text-stroke:0.08px #2d3345;">1.1.2021</div>
<div class="abs" style="left:419.10px;top:262px;font-size:7px;line-height:1;font-weight:400;color:#2a78e4;white-space:nowrap;transform:scaleX(0.87);transform-origin:left top;-webkit-text-stroke:0.08px #2a78e4;">EVERLY</div>
<div class="abs" style="left:487.90px;top:262px;font-size:7px;line-height:1;font-weight:400;color:#2d3345;white-space:nowrap;transform:scaleX(0.95);transform-origin:left top;-webkit-text-stroke:0.08px #2d3345;">Everly Property Management</div>
<div class="abs" style="left:622.30px;top:262px;font-size:7px;line-height:1;font-weight:400;color:#2d3345;white-space:nowrap;transform:scaleX(0.95);transform-origin:left top;-webkit-text-stroke:0.08px #2d3345;">$8980.00</div>
<div class="abs" style="left:696.90px;top:262px;font-size:7px;line-height:1;font-weight:400;color:#2d3345;white-space:nowrap;transform:scaleX(0.95);transform-origin:left top;-webkit-text-stroke:0.08px #2d3345;">1.1.2021</div>
<div class="abs" style="left:419.10px;top:277px;font-size:7px;line-height:1;font-weight:400;color:#2a78e4;white-space:nowrap;transform:scaleX(0.87);transform-origin:left top;-webkit-text-stroke:0.08px #2a78e4;">DEJULIA</div>
<div class="abs" style="left:487.90px;top:277px;font-size:7px;line-height:1;font-weight:400;color:#2d3345;white-space:nowrap;transform:scaleX(0.95);transform-origin:left top;-webkit-text-stroke:0.08px #2d3345;">Dejulia Wholesales Supplires</div>
<div class="abs" style="left:622.30px;top:277px;font-size:7px;line-height:1;font-weight:400;color:#2d3345;white-space:nowrap;transform:scaleX(0.95);transform-origin:left top;-webkit-text-stroke:0.08px #2d3345;">$8980.00</div>
<div class="abs" style="left:696.90px;top:277px;font-size:7px;line-height:1;font-weight:400;color:#2d3345;white-space:nowrap;transform:scaleX(0.95);transform-origin:left top;-webkit-text-stroke:0.08px #2d3345;">1.1.2021</div>
<div class="abs" style="left:422.80px;top:300px;font-size:9.3px;line-height:1;font-weight:400;color:#2a7be6;white-space:nowrap;transform:scaleX(0.957);transform-origin:left top;-webkit-text-stroke:0.2px #2a7be6;">View Purchase List</div>
<div class="panel" style="left:66px;top:328px;width:334.00px;height:155.60px">
<div class="ph" style="height:26.20px"></div>
</div>
<div class="abs" style="left:66.3px;top:337.9px;width:2px;height:9px;background:#1a6fe8"></div>
<div class="abs" style="left:75.00px;top:338px;font-size:10.3px;line-height:1;font-weight:700;color:#1f2b55;white-space:nowrap;">Customers Who Owe Money</div>
<div class="abs" style="left:66px;top:354.20px;width:334.00px;height:17.00px;background:#c9daf1"></div>
<div class="abs" style="left:66px;top:370.70px;width:334.00px;height:1px;background:#eaecf0"></div>
<div class="abs" style="left:66px;top:385.86px;width:334.00px;height:14.66px;background:#f8f8fa"></div>
<div class="abs" style="left:66px;top:385.36px;width:334.00px;height:1px;background:#eaecf0"></div>
<div class="abs" style="left:66px;top:400.02px;width:334.00px;height:1px;background:#eaecf0"></div>
<div class="abs" style="left:66px;top:415.18px;width:334.00px;height:14.66px;background:#f8f8fa"></div>
<div class="abs" style="left:66px;top:414.68px;width:334.00px;height:1px;background:#eaecf0"></div>
<div class="abs" style="left:66px;top:429.34px;width:334.00px;height:1px;background:#eaecf0"></div>
<div class="abs" style="left:66px;top:444.50px;width:334.00px;height:14.66px;background:#f8f8fa"></div>
<div class="abs" style="left:66px;top:444.00px;width:334.00px;height:1px;background:#eaecf0"></div>
<div class="abs" style="left:66px;top:458.66px;width:334.00px;height:1px;background:#eaecf0"></div>
<div class="abs" style="left:66px;top:473.32px;width:334.00px;height:1px;background:#eaecf0"></div>
<div class="abs" style="left:139.8px;top:354.20px;width:1px;height:119.62px;background:#dfe3ea"></div>
<div class="abs" style="left:270.9px;top:354.20px;width:1px;height:119.62px;background:#dfe3ea"></div>
<div class="abs" style="left:344.5px;top:354.20px;width:1px;height:119.62px;background:#dfe3ea"></div>
<div class="abs" style="left:69.50px;top:359px;font-size:7.6px;line-height:1;font-weight:400;color:#26325a;white-space:nowrap;transform:scaleX(0.86);transform-origin:left top;-webkit-text-stroke:0.24px #26325a;">CUSTOMER ID</div>
<div class="abs" style="left:143.80px;top:359px;font-size:7.6px;line-height:1;font-weight:400;color:#26325a;white-space:nowrap;transform:scaleX(0.86);transform-origin:left top;-webkit-text-stroke:0.24px #26325a;">CUSTOMER NAME</div>
<div class="abs" style="right:416.50px;top:359px;font-size:7.6px;line-height:1;font-weight:400;color:#26325a;white-space:nowrap;transform:scaleX(0.86);transform-origin:right top;-webkit-text-stroke:0.24px #26325a;">AMOUNT DUE</div>
<div class="abs" style="left:348.50px;top:359px;font-size:7.6px;line-height:1;font-weight:400;color:#26325a;white-space:nowrap;transform:scaleX(0.86);transform-origin:left top;-webkit-text-stroke:0.24px #26325a;">DUE DATE</div>
<div class="abs" style="left:69.10px;top:375px;font-size:7px;line-height:1;font-weight:400;color:#2a78e4;white-space:nowrap;transform:scaleX(0.87);transform-origin:left top;-webkit-text-stroke:0.08px #2a78e4;">EVERLY</div>
<div class="abs" style="left:143.80px;top:375px;font-size:7px;line-height:1;font-weight:400;color:#2d3345;white-space:nowrap;transform:scaleX(0.95);transform-origin:left top;-webkit-text-stroke:0.08px #2d3345;">Everly Property Management</div>
<div class="abs" style="left:274.90px;top:375px;font-size:7px;line-height:1;font-weight:400;color:#2d3345;white-space:nowrap;transform:scaleX(0.95);transform-origin:left top;-webkit-text-stroke:0.08px #2d3345;">$8980.00</div>
<div class="abs" style="left:348.50px;top:375px;font-size:7px;line-height:1;font-weight:400;color:#2d3345;white-space:nowrap;transform:scaleX(0.95);transform-origin:left top;-webkit-text-stroke:0.08px #2d3345;">1.1.2021</div>
<div class="abs" style="left:69.10px;top:389px;font-size:7px;line-height:1;font-weight:400;color:#2a78e4;white-space:nowrap;transform:scaleX(0.87);transform-origin:left top;-webkit-text-stroke:0.08px #2a78e4;">SNOWDEN</div>
<div class="abs" style="left:143.80px;top:389px;font-size:7px;line-height:1;font-weight:400;color:#2d3345;white-space:nowrap;transform:scaleX(0.95);transform-origin:left top;-webkit-text-stroke:0.08px #2d3345;">Snowden Interior Design</div>
<div class="abs" style="left:274.90px;top:389px;font-size:7px;line-height:1;font-weight:400;color:#2d3345;white-space:nowrap;transform:scaleX(0.95);transform-origin:left top;-webkit-text-stroke:0.08px #2d3345;">$8980.00</div>
<div class="abs" style="left:348.50px;top:389px;font-size:7px;line-height:1;font-weight:400;color:#2d3345;white-space:nowrap;transform:scaleX(0.95);transform-origin:left top;-webkit-text-stroke:0.08px #2d3345;">1.1.2021</div>
<div class="abs" style="left:69.10px;top:404px;font-size:7px;line-height:1;font-weight:400;color:#2a78e4;white-space:nowrap;transform:scaleX(0.87);transform-origin:left top;-webkit-text-stroke:0.08px #2a78e4;">CUMMINGS</div>
<div class="abs" style="left:143.80px;top:404px;font-size:7px;line-height:1;font-weight:400;color:#2d3345;white-space:nowrap;transform:scaleX(0.95);transform-origin:left top;-webkit-text-stroke:0.08px #2d3345;">Cummings Constructions</div>
<div class="abs" style="left:274.90px;top:404px;font-size:7px;line-height:1;font-weight:400;color:#2d3345;white-space:nowrap;transform:scaleX(0.95);transform-origin:left top;-webkit-text-stroke:0.08px #2d3345;">$8980.00</div>
<div class="abs" style="left:348.50px;top:404px;font-size:7px;line-height:1;font-weight:400;color:#2d3345;white-space:nowrap;transform:scaleX(0.95);transform-origin:left top;-webkit-text-stroke:0.08px #2d3345;">1.1.2021</div>
<div class="abs" style="left:69.10px;top:419px;font-size:7px;line-height:1;font-weight:400;color:#2a78e4;white-space:nowrap;transform:scaleX(0.87);transform-origin:left top;-webkit-text-stroke:0.08px #2a78e4;">TEESDALE</div>
<div class="abs" style="left:143.80px;top:419px;font-size:7px;line-height:1;font-weight:400;color:#2d3345;white-space:nowrap;transform:scaleX(0.95);transform-origin:left top;-webkit-text-stroke:0.08px #2d3345;">Teesdale Realstate</div>
<div class="abs" style="left:274.90px;top:419px;font-size:7px;line-height:1;font-weight:400;color:#2d3345;white-space:nowrap;transform:scaleX(0.95);transform-origin:left top;-webkit-text-stroke:0.08px #2d3345;">$8980.00</div>
<div class="abs" style="left:348.50px;top:419px;font-size:7px;line-height:1;font-weight:400;color:#2d3345;white-space:nowrap;transform:scaleX(0.95);transform-origin:left top;-webkit-text-stroke:0.08px #2d3345;">1.1.2021</div>
<div class="abs" style="left:69.10px;top:433px;font-size:7px;line-height:1;font-weight:400;color:#2a78e4;white-space:nowrap;transform:scaleX(0.87);transform-origin:left top;-webkit-text-stroke:0.08px #2a78e4;">SNOWDEN</div>
<div class="abs" style="left:143.80px;top:433px;font-size:7px;line-height:1;font-weight:400;color:#2d3345;white-space:nowrap;transform:scaleX(0.95);transform-origin:left top;-webkit-text-stroke:0.08px #2d3345;">Snowden Interior Design</div>
<div class="abs" style="left:274.90px;top:433px;font-size:7px;line-height:1;font-weight:400;color:#2d3345;white-space:nowrap;transform:scaleX(0.95);transform-origin:left top;-webkit-text-stroke:0.08px #2d3345;">$8980.00</div>
<div class="abs" style="left:348.50px;top:433px;font-size:7px;line-height:1;font-weight:400;color:#2d3345;white-space:nowrap;transform:scaleX(0.95);transform-origin:left top;-webkit-text-stroke:0.08px #2d3345;">1.1.2021</div>
<div class="abs" style="left:69.10px;top:448px;font-size:7px;line-height:1;font-weight:400;color:#2a78e4;white-space:nowrap;transform:scaleX(0.87);transform-origin:left top;-webkit-text-stroke:0.08px #2a78e4;">ARMSTRONG</div>
<div class="abs" style="left:143.80px;top:448px;font-size:7px;line-height:1;font-weight:400;color:#2d3345;white-space:nowrap;transform:scaleX(0.95);transform-origin:left top;-webkit-text-stroke:0.08px #2d3345;">Armstrong Landscaping</div>
<div class="abs" style="left:274.90px;top:448px;font-size:7px;line-height:1;font-weight:400;color:#2d3345;white-space:nowrap;transform:scaleX(0.95);transform-origin:left top;-webkit-text-stroke:0.08px #2d3345;">$8980.00</div>
<div class="abs" style="left:348.50px;top:448px;font-size:7px;line-height:1;font-weight:400;color:#2d3345;white-space:nowrap;transform:scaleX(0.95);transform-origin:left top;-webkit-text-stroke:0.08px #2d3345;">1.1.2021</div>
<div class="abs" style="left:69.10px;top:463px;font-size:7px;line-height:1;font-weight:400;color:#2a78e4;white-space:nowrap;transform:scaleX(0.87);transform-origin:left top;-webkit-text-stroke:0.08px #2a78e4;">EVERLY</div>
<div class="abs" style="left:143.80px;top:463px;font-size:7px;line-height:1;font-weight:400;color:#2d3345;white-space:nowrap;transform:scaleX(0.95);transform-origin:left top;-webkit-text-stroke:0.08px #2d3345;">Everly Property Management</div>
<div class="abs" style="left:274.90px;top:463px;font-size:7px;line-height:1;font-weight:400;color:#2d3345;white-space:nowrap;transform:scaleX(0.95);transform-origin:left top;-webkit-text-stroke:0.08px #2d3345;">$8980.00</div>
<div class="abs" style="left:348.50px;top:463px;font-size:7px;line-height:1;font-weight:400;color:#2d3345;white-space:nowrap;transform:scaleX(0.95);transform-origin:left top;-webkit-text-stroke:0.08px #2d3345;">1.1.2021</div>
<div class="panel" style="left:416px;top:328px;width:334.00px;height:155.60px">
<div class="ph" style="height:26.20px"></div>
</div>
<div class="abs" style="left:416.3px;top:337.9px;width:2px;height:9px;background:#1a6fe8"></div>
<div class="abs" style="left:425.00px;top:338px;font-size:10.3px;line-height:1;font-weight:700;color:#1f2b55;white-space:nowrap;">Aged Receivables</div>
<div class="abs" style="left:502.7px;top:354.20px;width:247.30px;height:17.00px;background:#c9daf1"></div>
<div class="abs" style="left:502.7px;top:370.70px;width:247.30px;height:1px;background:#eaecf0"></div>
<div class="abs" style="left:502.7px;top:385.86px;width:247.30px;height:14.66px;background:#f8f8fa"></div>
<div class="abs" style="left:502.7px;top:385.36px;width:247.30px;height:1px;background:#eaecf0"></div>
<div class="abs" style="left:502.7px;top:400.02px;width:247.30px;height:1px;background:#eaecf0"></div>
<div class="abs" style="left:502.7px;top:415.18px;width:247.30px;height:14.66px;background:#f8f8fa"></div>
<div class="abs" style="left:502.7px;top:414.68px;width:247.30px;height:1px;background:#eaecf0"></div>
<div class="abs" style="left:502.7px;top:429.34px;width:247.30px;height:1px;background:#eaecf0"></div>
<div class="abs" style="left:534.2px;top:354.20px;width:1px;height:75.64px;background:#dfe3ea"></div>
<div class="abs" style="left:627.9px;top:354.20px;width:1px;height:75.64px;background:#dfe3ea"></div>
<div class="abs" style="left:688.0px;top:354.20px;width:1px;height:75.64px;background:#dfe3ea"></div>
<div class="abs" style="left:506.20px;top:359px;font-size:7.6px;line-height:1;font-weight:400;color:#26325a;white-space:nowrap;transform:scaleX(0.86);transform-origin:left top;-webkit-text-stroke:0.24px #26325a;">KEY</div>
<div class="abs" style="left:538.20px;top:359px;font-size:7.6px;line-height:1;font-weight:400;color:#26325a;white-space:nowrap;transform:scaleX(0.86);transform-origin:left top;-webkit-text-stroke:0.24px #26325a;">DAYS OVERDUE</div>
<div class="abs" style="right:73.00px;top:359px;font-size:7.6px;line-height:1;font-weight:400;color:#26325a;white-space:nowrap;transform:scaleX(0.86);transform-origin:right top;-webkit-text-stroke:0.24px #26325a;">AMOUNT</div>
<div class="abs" style="left:692.00px;top:359px;font-size:7.6px;line-height:1;font-weight:400;color:#26325a;white-space:nowrap;transform:scaleX(0.86);transform-origin:left top;-webkit-text-stroke:0.24px #26325a;">PERCENT</div>
<div class="abs" style="left:506.00px;top:374.40px;width:8px;height:8px;background:#22a845"></div>
<div class="abs" style="left:538.20px;top:375px;font-size:7px;line-height:1;font-weight:400;color:#2d3345;white-space:nowrap;transform:scaleX(0.95);transform-origin:left top;-webkit-text-stroke:0.08px #2d3345;">Over 90 days</div>
<div class="abs" style="left:631.90px;top:375px;font-size:7px;line-height:1;font-weight:400;color:#2d3345;white-space:nowrap;transform:scaleX(0.95);transform-origin:left top;-webkit-text-stroke:0.08px #2d3345;">$0.00</div>
<div class="abs" style="left:692.00px;top:375px;font-size:7px;line-height:1;font-weight:400;color:#2d3345;white-space:nowrap;transform:scaleX(0.95);transform-origin:left top;-webkit-text-stroke:0.08px #2d3345;">0.0%</div>
<div class="abs" style="left:506.00px;top:389.06px;width:8px;height:8px;background:#1a73e8"></div>
<div class="abs" style="left:538.20px;top:389px;font-size:7px;line-height:1;font-weight:400;color:#2d3345;white-space:nowrap;transform:scaleX(0.95);transform-origin:left top;-webkit-text-stroke:0.08px #2d3345;">61 - 90</div>
<div class="abs" style="left:631.90px;top:389px;font-size:7px;line-height:1;font-weight:400;color:#2d3345;white-space:nowrap;transform:scaleX(0.95);transform-origin:left top;-webkit-text-stroke:0.08px #2d3345;">$0.00</div>
<div class="abs" style="left:692.00px;top:389px;font-size:7px;line-height:1;font-weight:400;color:#2d3345;white-space:nowrap;transform:scaleX(0.95);transform-origin:left top;-webkit-text-stroke:0.08px #2d3345;">0.0%</div>
<div class="abs" style="left:506.00px;top:403.72px;width:8px;height:8px;background:#ffe500"></div>
<div class="abs" style="left:538.20px;top:404px;font-size:7px;line-height:1;font-weight:400;color:#2d3345;white-space:nowrap;transform:scaleX(0.95);transform-origin:left top;-webkit-text-stroke:0.08px #2d3345;">31 - 60</div>
<div class="abs" style="left:631.90px;top:404px;font-size:7px;line-height:1;font-weight:400;color:#2d3345;white-space:nowrap;transform:scaleX(0.95);transform-origin:left top;-webkit-text-stroke:0.08px #2d3345;">$0.00</div>
<div class="abs" style="left:692.00px;top:404px;font-size:7px;line-height:1;font-weight:400;color:#2d3345;white-space:nowrap;transform:scaleX(0.95);transform-origin:left top;-webkit-text-stroke:0.08px #2d3345;">0.0%</div>
<div class="abs" style="left:506.00px;top:418.38px;width:8px;height:8px;background:#e8141e"></div>
<div class="abs" style="left:538.20px;top:419px;font-size:7px;line-height:1;font-weight:400;color:#2d3345;white-space:nowrap;transform:scaleX(0.95);transform-origin:left top;-webkit-text-stroke:0.08px #2d3345;">0 - 30</div>
<div class="abs" style="left:631.90px;top:419px;font-size:7px;line-height:1;font-weight:400;color:#2d3345;white-space:nowrap;transform:scaleX(0.95);transform-origin:left top;-webkit-text-stroke:0.08px #2d3345;">$0.00</div>
<div class="abs" style="left:692.00px;top:419px;font-size:7px;line-height:1;font-weight:400;color:#2d3345;white-space:nowrap;transform:scaleX(0.95);transform-origin:left top;-webkit-text-stroke:0.08px #2d3345;">0.0%</div>
<div class="abs" style="left:422.80px;top:467px;font-size:9.3px;line-height:1;font-weight:400;color:#2a7be6;white-space:nowrap;transform:scaleX(0.957);transform-origin:left top;-webkit-text-stroke:0.2px #2a7be6;">View Purchase List</div>
<div class="abs" style="left:416px;top:454.5px;width:334px;height:1px;background:#eaecf0"></div>
<svg class="abs" style="left:0;top:0" width="758" height="486" viewBox="0 0 758 486"><path d="M453.1,397.1 L484.00,397.10 A30.9,30.9 0 1 1 437.65,370.34 Z" fill="#2db34a"/><path d="M453.1,397.1 L437.65,370.34 A30.9,30.9 0 0 1 468.55,370.34 Z" fill="#1a73e8"/><path d="M453.1,397.1 L468.55,370.34 A30.9,30.9 0 0 1 484.00,397.10 Z" fill="#fff200"/><g font-family="Liberation Sans" font-size="7.6"><text x="447.3" y="382.4" textLength="13" lengthAdjust="spacingAndGlyphs" fill="#4a5590">17%</text><text x="462.1" y="391.2" textLength="13.4" lengthAdjust="spacingAndGlyphs" fill="#50503a">17%</text><text x="437.5" y="415.4" textLength="13.3" lengthAdjust="spacingAndGlyphs" fill="#5b7a5a">67%</text></g></svg>
</body></html>
